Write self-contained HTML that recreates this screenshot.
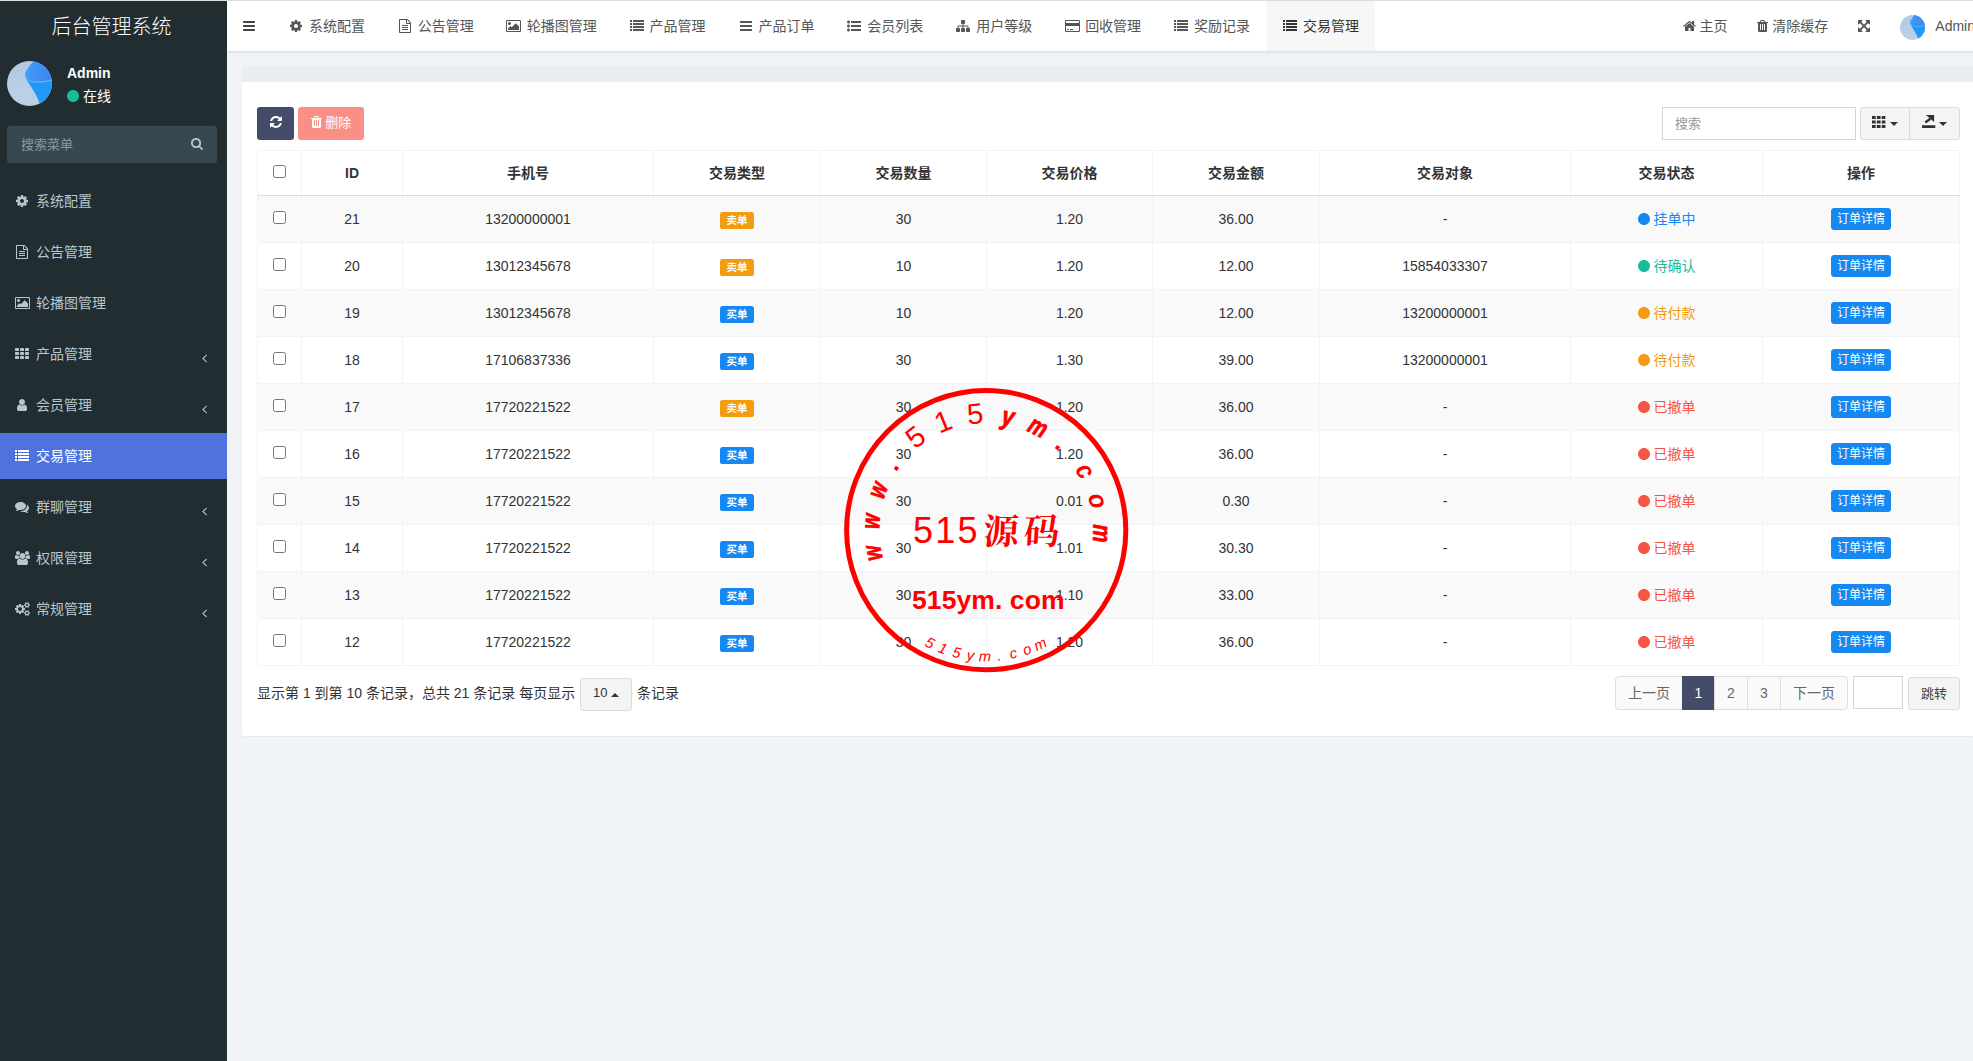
<!DOCTYPE html>
<html lang="zh-CN">
<head>
<meta charset="utf-8">
<title>后台管理系统</title>
<style>
*{box-sizing:border-box;}
html,body{margin:0;padding:0;}
html{overflow:hidden;}
body{width:1990px;height:1061px;position:relative;overflow:hidden;background:#f1f4f6;font-family:"Liberation Sans","Noto Sans CJK SC",sans-serif;font-size:14px;line-height:1.42857;color:#333;}
ul{list-style:none;margin:0;padding:0;}
a{text-decoration:none;color:inherit;}
svg.fa{display:inline-block;fill:currentColor;overflow:visible;}
.topline{position:absolute;left:0;top:0;width:1990px;height:1px;background:#dcdcdc;z-index:50;}
/* sidebar */
.sidebar{position:absolute;left:0;top:0;width:227px;height:1061px;background:#222d32;color:#b8c7ce;}
.logo{height:50px;line-height:54px;text-align:center;color:#fff;font-size:20px;font-weight:300;padding-right:4px;}
.user-panel{position:absolute;left:0;top:51px;width:227px;height:65px;}
.user-panel .avatar{position:absolute;left:7px;top:10px;}
.user-panel .info{position:absolute;left:67px;top:12px;color:#fff;}
.user-panel .info p{margin:0;font-weight:bold;font-size:14px;line-height:20px;}
.user-panel .st{font-size:14px;line-height:20px;margin-top:3px;}
.user-panel .st span{margin-left:4px;}
.sform{position:absolute;left:7px;top:126px;width:210px;height:37px;background:#374850;border-radius:3px;color:#8a9ba3;}
.sform .ph{position:absolute;left:14px;top:9px;font-size:13px;line-height:20px;}
.sform .sic{position:absolute;right:14px;top:7px;line-height:20px;}
.sform .sic svg{width:12px !important;height:13px !important;}
.smenu{position:absolute;left:0;top:178px;width:227px;}
.smenu li{height:46px;margin-bottom:5px;}
.smenu li a{display:block;height:46px;line-height:46px;padding-left:12px;position:relative;color:#b8c7ce;font-size:14px;}
.smenu li.active a{background:#4e73df;color:#fff;}
.smenu .arr{position:absolute;right:20.3px;top:3.5px;}
/* navbar */
.navbar{position:absolute;left:227px;top:1px;width:1763px;height:50px;background:#fff;box-shadow:0 1px 3px rgba(0,0,0,.12);color:#555;}
.navbar .toggle{position:absolute;left:0;top:0;width:44px;height:50px;line-height:50px;padding-left:16px;color:#444;}
.tabs{position:absolute;left:45px;top:0;height:50px;display:flex;}
.tabs li a{display:block;height:50px;line-height:50px;padding:0 15px;border-right:1px solid transparent;white-space:nowrap;color:#555;}
.tabs li.active a{background:#f7f7f7;color:#333;}
.rnav{position:absolute;right:0;top:0;height:50px;display:flex;}
.rnav li a{display:block;height:50px;line-height:50px;padding:0 15px;white-space:nowrap;color:#555;}
.rnav .um a{padding:0 15px 0 15px;}
.rnav .avatar{vertical-align:middle;margin-right:10px;margin-top:1px;}
/* content */
.content{position:absolute;left:242px;top:66px;width:1733px;}
.panel{background:#fff;border-radius:3px;box-shadow:0 1px 1px rgba(0,0,0,.05);height:670px;}
.phead{height:16px;background:#e8edf0;border-radius:3px 3px 0 0;}
.pbody{padding:0 15px;position:relative;}
.toolbar{position:absolute;left:15px;top:25px;width:1703px;height:33px;}
.btn{display:inline-block;height:33px;line-height:31px;font-size:13px;border-radius:3px;color:#fff;vertical-align:top;}
.bref{width:37px;background:#444c69;text-align:center;}
.bdel{width:66px;margin-left:4px;background:#f75444;opacity:.65;text-align:center;}
.tright{position:absolute;right:0;top:0;height:33px;}
.search{position:absolute;right:104px;top:0;width:194px;height:33px;border:1px solid #d2d6de;background:#fff;color:#999;padding-left:12px;line-height:31px;font-size:13px;}
.bgroup{position:absolute;right:0;top:0;width:100px;height:33px;display:flex;}
.bgroup a{display:block;height:33px;border:1px solid #ddd;background:#f4f4f4;line-height:31px;text-align:center;}
.bgroup .b1{width:50px;border-radius:3px 0 0 3px;}
.bgroup .b2{width:51px;margin-left:-1px;border-radius:0 3px 3px 0;}
.caret{display:inline-block;width:0;height:0;border-left:4px solid transparent;border-right:4px solid transparent;border-top:4px solid #333;vertical-align:middle;margin-left:4px;}
.caret.up{border-top:0;border-bottom:4px solid #333;}
/* table */
.tbl{position:absolute;left:15px;top:68px;width:1703px;border-collapse:collapse;table-layout:fixed;border:1px solid #f4f4f4;}
.tbl th,.tbl td{border:1px solid #f4f4f4;text-align:center;vertical-align:middle;padding:2px 0 0;font-size:14px;}
.tbl th{height:45px;font-weight:bold;border-bottom:1px solid #ddd;color:#333;}
.tbl td{height:47px;}
.tbl tbody tr:nth-child(odd){background:#f9f9f9;}
.chk{display:inline-block;width:13px;height:13px;border:1px solid #767676;border-radius:2.5px;background:#fff;vertical-align:middle;position:relative;top:-3px;}
.label{display:inline-block;font-size:10.5px;font-weight:bold;color:#fff;line-height:1;padding:.3em .6em .3em;border-radius:.25em;vertical-align:baseline;}
.lw{background:#f39c12;}
.li{background:#1688f1;}
.btn-xs{position:relative;top:-1px;display:inline-block;height:22px;line-height:21px;padding:0 5px;font-size:12px;color:#fff;background:#1688f1;border:1px solid #1688f1;border-radius:3px;}
/* pager */
.pager{position:absolute;left:15px;top:594px;width:1703px;height:34px;}
.pinfo{position:absolute;left:0;top:0;line-height:34px;white-space:nowrap;}
.psize{display:inline-block;width:52px;height:33px;line-height:28px;position:relative;top:0.5px;border:1px solid #ddd;background:#f4f4f4;border-radius:3px;text-align:center;vertical-align:middle;font-size:13px;margin:0 1px;}
.psize .caret{margin-left:0;vertical-align:0px;}
.pright{position:absolute;right:0;top:0;height:34px;}
.pg{position:absolute;right:112px;top:0;display:flex;height:34px;}
.pg li{height:34px;line-height:32px;padding:0;width:34px;text-align:center;border:1px solid #ddd;background:#fafafa;margin-left:-1px;color:#666;white-space:nowrap;}
.pg li:first-child{margin-left:0;width:68px;border-radius:4px 0 0 4px;}
.pg li:last-child{width:68px;border-radius:0 4px 4px 0;}
.pg li.active{background:#444c69;border-color:#444c69;color:#fff;width:33px;}
.jin{position:absolute;right:57px;top:0;width:50px;height:33px;border:1px solid #d2d6de;background:#fff;}
.jbtn{position:absolute;right:0;top:1px;width:52px;height:33px;line-height:31px;border:1px solid #ddd;background:#f4f4f4;border-radius:3px;text-align:center;font-size:13px;color:#444;}
/* watermark */
.wm{position:absolute;left:0;top:0;pointer-events:none;z-index:40;}
.wm text{fill:#ff0000;font-family:"Liberation Sans","Noto Sans CJK SC",sans-serif;}
.wm .kai{font-family:"Noto Serif CJK SC","Liberation Serif",serif;}

</style>
</head>
<body>
<div class="topline"></div>

<aside class="sidebar">
  <div class="logo">后台管理系统</div>
  <div class="user-panel">
    <svg class="avatar " width="45" height="45" viewBox="0 0 45 45"><defs><linearGradient id="agu45" x1="0" y1="0.5" x2="1" y2="0.6"><stop offset="0" stop-color="#469ffa"/><stop offset="0.35" stop-color="#3d92f7"/><stop offset="1" stop-color="#4385ee"/></linearGradient><linearGradient id="agl45" x1="0.2" y1="0" x2="0.6" y2="1"><stop offset="0" stop-color="#2a93f6"/><stop offset="1" stop-color="#1d9bf8"/></linearGradient><linearGradient id="agb45" x1="0" y1="0" x2="0" y2="1"><stop offset="0" stop-color="#b2c9e4"/><stop offset="1" stop-color="#bed1e7"/></linearGradient><clipPath id="ac45"><circle cx="22.5" cy="22.5" r="22.5"/></clipPath></defs><g clip-path="url(#ac45)"><rect width="45" height="45" fill="url(#agb45)"/><path d="M26.5 0 C23 5 17.5 10.5 18.3 15 C18.6 17.5 20.5 20 23.1 24.3 C25.5 28 29.5 34 33 43 L45 45 L45 0 Z" fill="url(#agl45)"/><path d="M26.5 0 C23 5 17.5 10.5 18.3 15 C19.5 19.5 24 21 30.6 21 C36 21 41 20 45 19 L45 0 Z" fill="url(#agu45)"/><path d="M18.3 15 C19.5 19.5 24 21 30.6 21 C36 21 41 20 45 19" fill="none" stroke="#62c6ff" stroke-width="1" opacity="0.95"/><path d="M26.3 0.3 C23 5 17.7 10.5 18.4 15" fill="none" stroke="#6bb4fb" stroke-width="0.7" opacity="0.6"/></g></svg>
    <div class="info"><p>Admin</p><div class="st"><svg class="fa " viewBox="0 -1536 1536 1792" style="width:12.000px;height:14px;vertical-align:-2.000px;fill:#18bc9c;"><path transform="scale(1,-1)" d="M1536 640C1536 1064 1192 1408 768 1408C344 1408 0 1064 0 640C0 216 344 -128 768 -128C1192 -128 1536 216 1536 640Z"/></svg><span>在线</span></div></div>
  </div>
  <div class="sform"><span class="ph">搜索菜单</span><span class="sic"><svg class="fa " viewBox="0 -1536 1664 1792" style="width:13.000px;height:14px;vertical-align:-2.000px;fill:#b8c7ce;"><path transform="scale(1,-1)" d="M1152 704C1152 457 951 256 704 256C457 256 256 457 256 704C256 951 457 1152 704 1152C951 1152 1152 951 1152 704ZM1664 -128C1664 -94 1650 -61 1627 -38L1284 305C1365 422 1408 562 1408 704C1408 1093 1093 1408 704 1408C315 1408 0 1093 0 704C0 315 315 0 704 0C846 0 986 43 1103 124L1446 -218C1469 -242 1502 -256 1536 -256C1606 -256 1664 -198 1664 -128Z"/></svg></span></div>
  <ul class="smenu">
<li class=""><a><svg class="fa " viewBox="0 -1536 1536 1792" style="width:12.000px;height:14px;vertical-align:-2.000px;margin:0 4.000px;"><path transform="scale(1,-1)" d="M1024 640C1024 499 909 384 768 384C627 384 512 499 512 640C512 781 627 896 768 896C909 896 1024 781 1024 640ZM1536 749C1536 766 1524 782 1507 785L1324 813C1314 846 1300 879 1283 911C1317 958 1354 1002 1388 1048C1393 1055 1396 1062 1396 1071C1396 1079 1394 1087 1389 1093C1347 1152 1277 1214 1224 1263C1217 1269 1208 1273 1199 1273C1190 1273 1181 1270 1175 1264L1033 1157C1004 1172 974 1184 943 1194L915 1378C913 1395 897 1408 879 1408H657C639 1408 625 1396 621 1380C605 1320 599 1255 592 1194C561 1184 530 1171 501 1156L363 1263C355 1269 346 1273 337 1273C303 1273 168 1127 144 1094C139 1087 135 1080 135 1071C135 1062 139 1054 145 1047C182 1002 218 957 252 909C236 879 223 849 213 817L27 789C12 786 0 768 0 753V531C0 514 12 498 29 495L212 468C222 434 236 401 253 369C219 322 182 278 148 232C143 225 140 218 140 209C140 201 142 193 147 186C189 128 259 66 312 18C319 11 328 7 337 7C346 7 355 10 362 16L503 123C532 108 562 96 593 86L621 -98C623 -115 639 -128 657 -128H879C897 -128 911 -116 915 -100C931 -40 937 25 944 86C975 96 1006 109 1035 124L1173 16C1181 11 1190 7 1199 7C1233 7 1368 154 1392 186C1398 193 1401 200 1401 209C1401 218 1397 227 1391 234C1354 279 1318 323 1284 372C1300 401 1312 431 1323 463L1508 491C1524 494 1536 512 1536 527Z"/></svg> <span>系统配置</span></a></li>
<li class=""><a><svg class="fa " viewBox="0 -1536 1536 1792" style="width:12.000px;height:14px;vertical-align:-2.000px;margin:0 4.000px;"><path transform="scale(1,-1)" d="M1468 1156 1156 1468C1119 1505 1045 1536 992 1536H96C43 1536 0 1493 0 1440V-160C0 -213 43 -256 96 -256H1440C1493 -256 1536 -213 1536 -160V992C1536 1045 1505 1119 1468 1156ZM1024 1400C1041 1394 1058 1385 1065 1378L1378 1065C1385 1058 1394 1041 1400 1024H1024ZM1408 -128H128V1408H896V992C896 939 939 896 992 896H1408ZM384 736V672C384 654 398 640 416 640H1120C1138 640 1152 654 1152 672V736C1152 754 1138 768 1120 768H416C398 768 384 754 384 736ZM1120 512H416C398 512 384 498 384 480V416C384 398 398 384 416 384H1120C1138 384 1152 398 1152 416V480C1152 498 1138 512 1120 512ZM1120 256H416C398 256 384 242 384 224V160C384 142 398 128 416 128H1120C1138 128 1152 142 1152 160V224C1152 242 1138 256 1120 256Z"/></svg> <span>公告管理</span></a></li>
<li class=""><a><svg class="fa " viewBox="0 -1536 1920 1792" style="width:15.000px;height:14px;vertical-align:-2.000px;margin:0 2.500px;"><path transform="scale(1,-1)" d="M640 960C640 1066 554 1152 448 1152C342 1152 256 1066 256 960C256 854 342 768 448 768C554 768 640 854 640 960ZM1664 576 1248 992 736 480 576 640 256 320V128H1664ZM1760 1280C1777 1280 1792 1265 1792 1248V32C1792 15 1777 0 1760 0H160C143 0 128 15 128 32V1248C128 1265 143 1280 160 1280H1760ZM1920 1248C1920 1336 1848 1408 1760 1408H160C72 1408 0 1336 0 1248V32C0 -56 72 -128 160 -128H1760C1848 -128 1920 -56 1920 32Z"/></svg> <span>轮播图管理</span></a></li>
<li class=""><a><svg class="fa " viewBox="0 -1536 1792 1792" style="width:14.000px;height:14px;vertical-align:-2.000px;margin:0 3.000px;"><path transform="scale(1,-1)" d="M512 288C512 341 469 384 416 384H96C43 384 0 341 0 288V96C0 43 43 0 96 0H416C469 0 512 43 512 96ZM512 800C512 853 469 896 416 896H96C43 896 0 853 0 800V608C0 555 43 512 96 512H416C469 512 512 555 512 608ZM1152 288C1152 341 1109 384 1056 384H736C683 384 640 341 640 288V96C640 43 683 0 736 0H1056C1109 0 1152 43 1152 96ZM512 1312C512 1365 469 1408 416 1408H96C43 1408 0 1365 0 1312V1120C0 1067 43 1024 96 1024H416C469 1024 512 1067 512 1120ZM1152 800C1152 853 1109 896 1056 896H736C683 896 640 853 640 800V608C640 555 683 512 736 512H1056C1109 512 1152 555 1152 608ZM1792 288C1792 341 1749 384 1696 384H1376C1323 384 1280 341 1280 288V96C1280 43 1323 0 1376 0H1696C1749 0 1792 43 1792 96ZM1152 1312C1152 1365 1109 1408 1056 1408H736C683 1408 640 1365 640 1312V1120C640 1067 683 1024 736 1024H1056C1109 1024 1152 1067 1152 1120ZM1792 800C1792 853 1749 896 1696 896H1376C1323 896 1280 853 1280 800V608C1280 555 1323 512 1376 512H1696C1749 512 1792 555 1792 608ZM1792 1312C1792 1365 1749 1408 1696 1408H1376C1323 1408 1280 1365 1280 1312V1120C1280 1067 1323 1024 1376 1024H1696C1749 1024 1792 1067 1792 1120Z"/></svg> <span>产品管理</span><span class="arr"><svg class="fa " viewBox="0 -1536 640 1792" style="width:5.000px;height:14px;vertical-align:-2.000px;"><path transform="scale(1,-1)" d="M627 992C627 1001 623 1009 617 1015L567 1065C561 1071 552 1075 544 1075C536 1075 527 1071 521 1065L55 599C49 593 45 584 45 576C45 568 49 559 55 553L521 87C527 81 536 77 544 77C552 77 561 81 567 87L617 137C623 143 627 152 627 160C627 168 623 177 617 183L224 576L617 969C623 975 627 984 627 992Z"/></svg></span></a></li>
<li class=""><a><svg class="fa " viewBox="0 -1536 1280 1792" style="width:10.000px;height:14px;vertical-align:-2.000px;margin:0 5.000px;"><path transform="scale(1,-1)" d="M1280 137C1280 400 1215 704 953 704C872 625 762 576 640 576C518 576 408 625 327 704C65 704 0 400 0 137C0 -9 96 -128 213 -128H1067C1184 -128 1280 -9 1280 137ZM1024 1024C1024 1236 852 1408 640 1408C428 1408 256 1236 256 1024C256 812 428 640 640 640C852 640 1024 812 1024 1024Z"/></svg> <span>会员管理</span><span class="arr"><svg class="fa " viewBox="0 -1536 640 1792" style="width:5.000px;height:14px;vertical-align:-2.000px;"><path transform="scale(1,-1)" d="M627 992C627 1001 623 1009 617 1015L567 1065C561 1071 552 1075 544 1075C536 1075 527 1071 521 1065L55 599C49 593 45 584 45 576C45 568 49 559 55 553L521 87C527 81 536 77 544 77C552 77 561 81 567 87L617 137C623 143 627 152 627 160C627 168 623 177 617 183L224 576L617 969C623 975 627 984 627 992Z"/></svg></span></a></li>
<li class="active"><a><svg class="fa " viewBox="0 -1536 1792 1792" style="width:14.000px;height:14px;vertical-align:-2.000px;margin:0 3.000px;"><path transform="scale(1,-1)" d="M256 224C256 241 241 256 224 256H32C15 256 0 241 0 224V32C0 15 15 0 32 0H224C241 0 256 15 256 32ZM256 608C256 625 241 640 224 640H32C15 640 0 625 0 608V416C0 399 15 384 32 384H224C241 384 256 399 256 416ZM256 992C256 1009 241 1024 224 1024H32C15 1024 0 1009 0 992V800C0 783 15 768 32 768H224C241 768 256 783 256 800ZM1792 224C1792 241 1777 256 1760 256H416C399 256 384 241 384 224V32C384 15 399 0 416 0H1760C1777 0 1792 15 1792 32ZM256 1376C256 1393 241 1408 224 1408H32C15 1408 0 1393 0 1376V1184C0 1167 15 1152 32 1152H224C241 1152 256 1167 256 1184ZM1792 608C1792 625 1777 640 1760 640H416C399 640 384 625 384 608V416C384 399 399 384 416 384H1760C1777 384 1792 399 1792 416ZM1792 992C1792 1009 1777 1024 1760 1024H416C399 1024 384 1009 384 992V800C384 783 399 768 416 768H1760C1777 768 1792 783 1792 800ZM1792 1376C1792 1393 1777 1408 1760 1408H416C399 1408 384 1393 384 1376V1184C384 1167 399 1152 416 1152H1760C1777 1152 1792 1167 1792 1184Z"/></svg> <span>交易管理</span></a></li>
<li class=""><a><svg class="fa " viewBox="0 -1536 1792 1792" style="width:14.000px;height:14px;vertical-align:-2.000px;margin:0 3.000px;"><path transform="scale(1,-1)" d="M1408 768C1408 1051 1093 1280 704 1280C315 1280 0 1051 0 768C0 606 104 461 266 367C232 284 188 245 149 201C138 188 125 176 129 157C129 157 129 157 129 157C132 140 146 128 161 128C162 128 163 128 164 128C194 132 223 137 250 144C351 170 445 213 528 272C584 262 643 256 704 256C1093 256 1408 485 1408 768ZM1792 512C1792 679 1682 827 1513 920C1528 871 1536 820 1536 768C1536 589 1444 424 1277 302C1122 190 919 128 704 128C675 128 645 130 616 132C741 50 907 0 1088 0C1149 0 1208 6 1264 16C1347 -43 1441 -86 1542 -112C1569 -119 1598 -124 1628 -128C1644 -130 1659 -117 1663 -99C1663 -99 1663 -99 1663 -99C1667 -80 1654 -68 1643 -55C1604 -11 1560 28 1526 111C1688 205 1792 349 1792 512Z"/></svg> <span>群聊管理</span><span class="arr"><svg class="fa " viewBox="0 -1536 640 1792" style="width:5.000px;height:14px;vertical-align:-2.000px;"><path transform="scale(1,-1)" d="M627 992C627 1001 623 1009 617 1015L567 1065C561 1071 552 1075 544 1075C536 1075 527 1071 521 1065L55 599C49 593 45 584 45 576C45 568 49 559 55 553L521 87C527 81 536 77 544 77C552 77 561 81 567 87L617 137C623 143 627 152 627 160C627 168 623 177 617 183L224 576L617 969C623 975 627 984 627 992Z"/></svg></span></a></li>
<li class=""><a><svg class="fa " viewBox="0 -1536 1920 1792" style="width:15.000px;height:14px;vertical-align:-2.000px;margin:0 2.500px;"><path transform="scale(1,-1)" d="M593 640C541 715 512 805 512 896C512 918 514 940 517 962C474 947 430 939 384 939C249 939 145 1024 124 1024C-3 1024 0 752 0 671C0 560 94 512 194 512H328C395 592 489 637 593 640ZM1664 3C1664 229 1611 576 1318 576C1284 576 1160 437 960 437C760 437 636 576 602 576C309 576 256 229 256 3C256 -159 363 -256 523 -256H1397C1557 -256 1664 -159 1664 3ZM640 1280C640 1421 525 1536 384 1536C243 1536 128 1421 128 1280C128 1139 243 1024 384 1024C525 1024 640 1139 640 1280ZM1344 896C1344 1108 1172 1280 960 1280C748 1280 576 1108 576 896C576 684 748 512 960 512C1172 512 1344 684 1344 896ZM1920 671C1920 752 1923 1024 1796 1024C1775 1024 1671 939 1536 939C1490 939 1446 947 1403 962C1406 940 1408 918 1408 896C1408 805 1379 715 1327 640C1431 637 1525 592 1592 512H1726C1826 512 1920 560 1920 671ZM1792 1280C1792 1421 1677 1536 1536 1536C1395 1536 1280 1421 1280 1280C1280 1139 1395 1024 1536 1024C1677 1024 1792 1139 1792 1280Z"/></svg> <span>权限管理</span><span class="arr"><svg class="fa " viewBox="0 -1536 640 1792" style="width:5.000px;height:14px;vertical-align:-2.000px;"><path transform="scale(1,-1)" d="M627 992C627 1001 623 1009 617 1015L567 1065C561 1071 552 1075 544 1075C536 1075 527 1071 521 1065L55 599C49 593 45 584 45 576C45 568 49 559 55 553L521 87C527 81 536 77 544 77C552 77 561 81 567 87L617 137C623 143 627 152 627 160C627 168 623 177 617 183L224 576L617 969C623 975 627 984 627 992Z"/></svg></span></a></li>
<li class=""><a><svg class="fa " viewBox="0 -1536 1920 1792" style="width:15.000px;height:14px;vertical-align:-2.000px;margin:0 2.500px;"><path transform="scale(1,-1)" d="M896 640C896 499 781 384 640 384C499 384 384 499 384 640C384 781 499 896 640 896C781 896 896 781 896 640ZM1664 128C1664 58 1607 0 1536 0C1466 0 1408 57 1408 128C1408 198 1466 256 1536 256C1606 256 1664 198 1664 128ZM1664 1152C1664 1082 1607 1024 1536 1024C1466 1024 1408 1081 1408 1152C1408 1222 1466 1280 1536 1280C1606 1280 1664 1222 1664 1152ZM1280 731C1280 745 1270 758 1256 761L1104 784C1095 812 1083 839 1070 866C1098 905 1128 941 1157 980C1161 986 1164 992 1164 999C1164 1027 1046 1135 1020 1159C1014 1164 1007 1167 999 1167C992 1167 985 1165 979 1160L861 1071C837 1083 812 1094 786 1102L763 1255C761 1269 747 1280 733 1280H547C533 1280 521 1270 517 1256C504 1207 499 1152 494 1102C467 1093 442 1083 417 1070L302 1160C296 1164 289 1167 281 1167C252 1167 140 1046 120 1019C115 1013 113 1006 113 999C113 992 116 985 120 979C152 941 182 904 210 864C197 839 186 814 178 788L23 764C10 762 0 747 0 734V549C0 535 10 522 24 520L176 496C185 468 197 441 211 414C182 375 152 338 123 300C119 294 116 288 116 281C116 252 234 145 260 121C266 116 273 113 281 113C288 113 296 115 301 120L419 209C443 197 468 186 494 178L517 25C519 11 533 0 547 0H733C747 0 759 10 763 24C776 73 781 128 786 179C813 187 838 197 863 210L978 120C984 116 991 113 999 113C1028 113 1140 235 1160 262C1165 267 1167 274 1167 281C1167 289 1164 295 1160 301C1128 339 1098 376 1070 416C1083 441 1094 466 1102 492L1257 516C1270 518 1280 533 1280 546ZM1920 198C1920 213 1791 227 1771 229C1763 247 1753 265 1741 281C1750 301 1792 401 1792 419C1792 421 1791 424 1788 426C1776 433 1669 496 1664 496L1658 494C1624 460 1594 421 1566 382C1556 383 1546 384 1536 384C1526 384 1516 383 1506 382C1496 397 1421 496 1408 496C1403 496 1296 432 1284 426C1281 424 1280 421 1280 419C1280 402 1322 301 1331 281C1319 265 1309 247 1301 229C1281 227 1152 213 1152 198V58C1152 43 1281 29 1301 27C1309 8 1319 -9 1331 -25C1322 -45 1280 -146 1280 -163C1280 -165 1281 -168 1284 -170C1296 -177 1403 -241 1408 -241C1421 -241 1496 -141 1506 -126C1516 -127 1526 -128 1536 -128C1546 -128 1556 -127 1566 -126C1576 -141 1651 -241 1664 -241C1669 -241 1776 -177 1788 -170C1791 -168 1792 -166 1792 -163C1792 -145 1750 -45 1741 -25C1753 -9 1763 8 1771 27C1791 29 1920 43 1920 58ZM1920 1222C1920 1237 1791 1251 1771 1253C1763 1271 1753 1289 1741 1305C1750 1325 1792 1425 1792 1443C1792 1445 1791 1448 1788 1450C1776 1457 1669 1520 1664 1520L1658 1518C1624 1484 1594 1445 1566 1406C1556 1407 1546 1408 1536 1408C1526 1408 1516 1407 1506 1406C1496 1421 1421 1520 1408 1520C1403 1520 1296 1456 1284 1450C1281 1448 1280 1445 1280 1443C1280 1426 1322 1325 1331 1305C1319 1289 1309 1271 1301 1253C1281 1251 1152 1237 1152 1222V1082C1152 1067 1281 1053 1301 1051C1309 1032 1319 1015 1331 999C1322 979 1280 878 1280 861C1280 859 1281 856 1284 854C1296 847 1403 783 1408 783C1421 783 1496 883 1506 898C1516 897 1526 896 1536 896C1546 896 1556 897 1566 898C1576 883 1651 783 1664 783C1669 783 1776 847 1788 854C1791 856 1792 858 1792 861C1792 879 1750 979 1741 999C1753 1015 1763 1032 1771 1051C1791 1053 1920 1067 1920 1082Z"/></svg> <span>常规管理</span><span class="arr"><svg class="fa " viewBox="0 -1536 640 1792" style="width:5.000px;height:14px;vertical-align:-2.000px;"><path transform="scale(1,-1)" d="M627 992C627 1001 623 1009 617 1015L567 1065C561 1071 552 1075 544 1075C536 1075 527 1071 521 1065L55 599C49 593 45 584 45 576C45 568 49 559 55 553L521 87C527 81 536 77 544 77C552 77 561 81 567 87L617 137C623 143 627 152 627 160C627 168 623 177 617 183L224 576L617 969C623 975 627 984 627 992Z"/></svg></span></a></li>
  </ul>
</aside>

<header class="navbar">
  <a class="toggle"><svg class="fa " viewBox="0 -1536 1536 1792" style="width:12.000px;height:14px;vertical-align:-2.000px;"><path transform="scale(1,-1)" d="M1536 192C1536 227 1507 256 1472 256H64C29 256 0 227 0 192V64C0 29 29 0 64 0H1472C1507 0 1536 29 1536 64ZM1536 704C1536 739 1507 768 1472 768H64C29 768 0 739 0 704V576C0 541 29 512 64 512H1472C1507 512 1536 541 1536 576ZM1536 1216C1536 1251 1507 1280 1472 1280H64C29 1280 0 1251 0 1216V1088C0 1053 29 1024 64 1024H1472C1507 1024 1536 1053 1536 1088Z"/></svg></a>
  <ul class="tabs"><li class=""><a><svg class="fa " viewBox="0 -1536 1536 1792" style="width:12.000px;height:14px;vertical-align:-2.000px;margin:0 3.000px;"><path transform="scale(1,-1)" d="M1024 640C1024 499 909 384 768 384C627 384 512 499 512 640C512 781 627 896 768 896C909 896 1024 781 1024 640ZM1536 749C1536 766 1524 782 1507 785L1324 813C1314 846 1300 879 1283 911C1317 958 1354 1002 1388 1048C1393 1055 1396 1062 1396 1071C1396 1079 1394 1087 1389 1093C1347 1152 1277 1214 1224 1263C1217 1269 1208 1273 1199 1273C1190 1273 1181 1270 1175 1264L1033 1157C1004 1172 974 1184 943 1194L915 1378C913 1395 897 1408 879 1408H657C639 1408 625 1396 621 1380C605 1320 599 1255 592 1194C561 1184 530 1171 501 1156L363 1263C355 1269 346 1273 337 1273C303 1273 168 1127 144 1094C139 1087 135 1080 135 1071C135 1062 139 1054 145 1047C182 1002 218 957 252 909C236 879 223 849 213 817L27 789C12 786 0 768 0 753V531C0 514 12 498 29 495L212 468C222 434 236 401 253 369C219 322 182 278 148 232C143 225 140 218 140 209C140 201 142 193 147 186C189 128 259 66 312 18C319 11 328 7 337 7C346 7 355 10 362 16L503 123C532 108 562 96 593 86L621 -98C623 -115 639 -128 657 -128H879C897 -128 911 -116 915 -100C931 -40 937 25 944 86C975 96 1006 109 1035 124L1173 16C1181 11 1190 7 1199 7C1233 7 1368 154 1392 186C1398 193 1401 200 1401 209C1401 218 1397 227 1391 234C1354 279 1318 323 1284 372C1300 401 1312 431 1323 463L1508 491C1524 494 1536 512 1536 527Z"/></svg> <span>系统配置</span></a></li><li class=""><a><svg class="fa " viewBox="0 -1536 1536 1792" style="width:12.000px;height:14px;vertical-align:-2.000px;margin:0 3.000px;"><path transform="scale(1,-1)" d="M1468 1156 1156 1468C1119 1505 1045 1536 992 1536H96C43 1536 0 1493 0 1440V-160C0 -213 43 -256 96 -256H1440C1493 -256 1536 -213 1536 -160V992C1536 1045 1505 1119 1468 1156ZM1024 1400C1041 1394 1058 1385 1065 1378L1378 1065C1385 1058 1394 1041 1400 1024H1024ZM1408 -128H128V1408H896V992C896 939 939 896 992 896H1408ZM384 736V672C384 654 398 640 416 640H1120C1138 640 1152 654 1152 672V736C1152 754 1138 768 1120 768H416C398 768 384 754 384 736ZM1120 512H416C398 512 384 498 384 480V416C384 398 398 384 416 384H1120C1138 384 1152 398 1152 416V480C1152 498 1138 512 1120 512ZM1120 256H416C398 256 384 242 384 224V160C384 142 398 128 416 128H1120C1138 128 1152 142 1152 160V224C1152 242 1138 256 1120 256Z"/></svg> <span>公告管理</span></a></li><li class=""><a><svg class="fa " viewBox="0 -1536 1920 1792" style="width:15.000px;height:14px;vertical-align:-2.000px;margin:0 1.500px;"><path transform="scale(1,-1)" d="M640 960C640 1066 554 1152 448 1152C342 1152 256 1066 256 960C256 854 342 768 448 768C554 768 640 854 640 960ZM1664 576 1248 992 736 480 576 640 256 320V128H1664ZM1760 1280C1777 1280 1792 1265 1792 1248V32C1792 15 1777 0 1760 0H160C143 0 128 15 128 32V1248C128 1265 143 1280 160 1280H1760ZM1920 1248C1920 1336 1848 1408 1760 1408H160C72 1408 0 1336 0 1248V32C0 -56 72 -128 160 -128H1760C1848 -128 1920 -56 1920 32Z"/></svg> <span>轮播图管理</span></a></li><li class=""><a><svg class="fa " viewBox="0 -1536 1792 1792" style="width:14.000px;height:14px;vertical-align:-2.000px;margin:0 2.000px;"><path transform="scale(1,-1)" d="M256 224C256 241 241 256 224 256H32C15 256 0 241 0 224V32C0 15 15 0 32 0H224C241 0 256 15 256 32ZM256 608C256 625 241 640 224 640H32C15 640 0 625 0 608V416C0 399 15 384 32 384H224C241 384 256 399 256 416ZM256 992C256 1009 241 1024 224 1024H32C15 1024 0 1009 0 992V800C0 783 15 768 32 768H224C241 768 256 783 256 800ZM1792 224C1792 241 1777 256 1760 256H416C399 256 384 241 384 224V32C384 15 399 0 416 0H1760C1777 0 1792 15 1792 32ZM256 1376C256 1393 241 1408 224 1408H32C15 1408 0 1393 0 1376V1184C0 1167 15 1152 32 1152H224C241 1152 256 1167 256 1184ZM1792 608C1792 625 1777 640 1760 640H416C399 640 384 625 384 608V416C384 399 399 384 416 384H1760C1777 384 1792 399 1792 416ZM1792 992C1792 1009 1777 1024 1760 1024H416C399 1024 384 1009 384 992V800C384 783 399 768 416 768H1760C1777 768 1792 783 1792 800ZM1792 1376C1792 1393 1777 1408 1760 1408H416C399 1408 384 1393 384 1376V1184C384 1167 399 1152 416 1152H1760C1777 1152 1792 1167 1792 1184Z"/></svg> <span>产品管理</span></a></li><li class=""><a><svg class="fa " viewBox="0 -1536 1536 1792" style="width:12.000px;height:14px;vertical-align:-2.000px;margin:0 3.000px;"><path transform="scale(1,-1)" d="M1536 192C1536 227 1507 256 1472 256H64C29 256 0 227 0 192V64C0 29 29 0 64 0H1472C1507 0 1536 29 1536 64ZM1536 704C1536 739 1507 768 1472 768H64C29 768 0 739 0 704V576C0 541 29 512 64 512H1472C1507 512 1536 541 1536 576ZM1536 1216C1536 1251 1507 1280 1472 1280H64C29 1280 0 1251 0 1216V1088C0 1053 29 1024 64 1024H1472C1507 1024 1536 1053 1536 1088Z"/></svg> <span>产品订单</span></a></li><li class=""><a><svg class="fa " viewBox="0 -1536 1792 1792" style="width:14.000px;height:14px;vertical-align:-2.000px;margin:0 2.000px;"><path transform="scale(1,-1)" d="M384 128C384 234 298 320 192 320C86 320 0 234 0 128C0 22 86 -64 192 -64C298 -64 384 22 384 128ZM384 640C384 746 298 832 192 832C86 832 0 746 0 640C0 534 86 448 192 448C298 448 384 534 384 640ZM1792 224C1792 241 1777 256 1760 256H544C527 256 512 241 512 224V32C512 15 527 0 544 0H1760C1777 0 1792 15 1792 32ZM384 1152C384 1258 298 1344 192 1344C86 1344 0 1258 0 1152C0 1046 86 960 192 960C298 960 384 1046 384 1152ZM1792 736C1792 753 1777 768 1760 768H544C527 768 512 753 512 736V544C512 527 527 512 544 512H1760C1777 512 1792 527 1792 544ZM1792 1248C1792 1265 1777 1280 1760 1280H544C527 1280 512 1265 512 1248V1056C512 1039 527 1024 544 1024H1760C1777 1024 1792 1039 1792 1056Z"/></svg> <span>会员列表</span></a></li><li class=""><a><svg class="fa " viewBox="0 -1536 1792 1792" style="width:14.000px;height:14px;vertical-align:-2.000px;margin:0 2.000px;"><path transform="scale(1,-1)" d="M1792 288C1792 341 1749 384 1696 384H1600V576C1600 646 1542 704 1472 704H960V896H1056C1109 896 1152 939 1152 992V1312C1152 1365 1109 1408 1056 1408H736C683 1408 640 1365 640 1312V992C640 939 683 896 736 896H832V704H320C250 704 192 646 192 576V384H96C43 384 0 341 0 288V-32C0 -85 43 -128 96 -128H416C469 -128 512 -85 512 -32V288C512 341 469 384 416 384H320V576H832V384H736C683 384 640 341 640 288V-32C640 -85 683 -128 736 -128H1056C1109 -128 1152 -85 1152 -32V288C1152 341 1109 384 1056 384H960V576H1472V384H1376C1323 384 1280 341 1280 288V-32C1280 -85 1323 -128 1376 -128H1696C1749 -128 1792 -85 1792 -32Z"/></svg> <span>用户等级</span></a></li><li class=""><a><svg class="fa " viewBox="0 -1536 1920 1792" style="width:15.000px;height:14px;vertical-align:-2.000px;margin:0 1.500px;"><path transform="scale(1,-1)" d="M1760 1408H160C72 1408 0 1336 0 1248V32C0 -56 72 -128 160 -128H1760C1848 -128 1920 -56 1920 32V1248C1920 1336 1848 1408 1760 1408ZM160 1280H1760C1777 1280 1792 1265 1792 1248V1024H128V1248C128 1265 143 1280 160 1280ZM1760 0H160C143 0 128 15 128 32V640H1792V32C1792 15 1777 0 1760 0ZM256 128H512V256H256ZM640 128H1024V256H640Z"/></svg> <span>回收管理</span></a></li><li class=""><a><svg class="fa " viewBox="0 -1536 1792 1792" style="width:14.000px;height:14px;vertical-align:-2.000px;margin:0 2.000px;"><path transform="scale(1,-1)" d="M256 224C256 241 241 256 224 256H32C15 256 0 241 0 224V32C0 15 15 0 32 0H224C241 0 256 15 256 32ZM256 608C256 625 241 640 224 640H32C15 640 0 625 0 608V416C0 399 15 384 32 384H224C241 384 256 399 256 416ZM256 992C256 1009 241 1024 224 1024H32C15 1024 0 1009 0 992V800C0 783 15 768 32 768H224C241 768 256 783 256 800ZM1792 224C1792 241 1777 256 1760 256H416C399 256 384 241 384 224V32C384 15 399 0 416 0H1760C1777 0 1792 15 1792 32ZM256 1376C256 1393 241 1408 224 1408H32C15 1408 0 1393 0 1376V1184C0 1167 15 1152 32 1152H224C241 1152 256 1167 256 1184ZM1792 608C1792 625 1777 640 1760 640H416C399 640 384 625 384 608V416C384 399 399 384 416 384H1760C1777 384 1792 399 1792 416ZM1792 992C1792 1009 1777 1024 1760 1024H416C399 1024 384 1009 384 992V800C384 783 399 768 416 768H1760C1777 768 1792 783 1792 800ZM1792 1376C1792 1393 1777 1408 1760 1408H416C399 1408 384 1393 384 1376V1184C384 1167 399 1152 416 1152H1760C1777 1152 1792 1167 1792 1184Z"/></svg> <span>奖励记录</span></a></li><li class="active"><a><svg class="fa " viewBox="0 -1536 1792 1792" style="width:14.000px;height:14px;vertical-align:-2.000px;margin:0 2.000px;"><path transform="scale(1,-1)" d="M256 224C256 241 241 256 224 256H32C15 256 0 241 0 224V32C0 15 15 0 32 0H224C241 0 256 15 256 32ZM256 608C256 625 241 640 224 640H32C15 640 0 625 0 608V416C0 399 15 384 32 384H224C241 384 256 399 256 416ZM256 992C256 1009 241 1024 224 1024H32C15 1024 0 1009 0 992V800C0 783 15 768 32 768H224C241 768 256 783 256 800ZM1792 224C1792 241 1777 256 1760 256H416C399 256 384 241 384 224V32C384 15 399 0 416 0H1760C1777 0 1792 15 1792 32ZM256 1376C256 1393 241 1408 224 1408H32C15 1408 0 1393 0 1376V1184C0 1167 15 1152 32 1152H224C241 1152 256 1167 256 1184ZM1792 608C1792 625 1777 640 1760 640H416C399 640 384 625 384 608V416C384 399 399 384 416 384H1760C1777 384 1792 399 1792 416ZM1792 992C1792 1009 1777 1024 1760 1024H416C399 1024 384 1009 384 992V800C384 783 399 768 416 768H1760C1777 768 1792 783 1792 800ZM1792 1376C1792 1393 1777 1408 1760 1408H416C399 1408 384 1393 384 1376V1184C384 1167 399 1152 416 1152H1760C1777 1152 1792 1167 1792 1184Z"/></svg> <span>交易管理</span></a></li></ul>
  <ul class="rnav">
    <li><a><svg class="fa " viewBox="0 -1536 1664 1792" style="width:13.000px;height:14px;vertical-align:-2.000px;"><path transform="scale(1,-1)" d="M1408 544C1408 546 1408 548 1407 550L832 1024L257 550C257 548 256 546 256 544V64C256 29 285 0 320 0H704V384H960V0H1344C1379 0 1408 29 1408 64ZM1631 613C1642 626 1640 647 1627 658L1408 840V1248C1408 1266 1394 1280 1376 1280H1184C1166 1280 1152 1266 1152 1248V1053L908 1257C866 1292 798 1292 756 1257L37 658C24 647 22 626 33 613L95 539C100 533 108 529 116 528C125 527 133 530 140 535L832 1112L1524 535C1530 530 1537 528 1545 528C1546 528 1547 528 1548 528C1556 529 1564 533 1569 539L1631 613Z"/></svg> 主页</a></li>
    <li><a><svg class="fa " viewBox="0 -1536 1408 1792" style="width:11.000px;height:14px;vertical-align:-2.000px;"><path transform="scale(1,-1)" d="M512 160C512 142 498 128 480 128H416C398 128 384 142 384 160V864C384 882 398 896 416 896H480C498 896 512 882 512 864V160ZM768 160C768 142 754 128 736 128H672C654 128 640 142 640 160V864C640 882 654 896 672 896H736C754 896 768 882 768 864V160ZM1024 160C1024 142 1010 128 992 128H928C910 128 896 142 896 160V864C896 882 910 896 928 896H992C1010 896 1024 882 1024 864V160ZM480 1152 529 1269C532 1273 540 1279 546 1280H863C868 1279 877 1273 880 1269L928 1152ZM1408 1120C1408 1138 1394 1152 1376 1152H1067L997 1319C977 1368 917 1408 864 1408H544C491 1408 431 1368 411 1319L341 1152H32C14 1152 0 1138 0 1120V1056C0 1038 14 1024 32 1024H128V72C128 -38 200 -128 288 -128H1120C1208 -128 1280 -34 1280 76V1024H1376C1394 1024 1408 1038 1408 1056Z"/></svg> 清除缓存</a></li>
    <li><a><svg class="fa " viewBox="0 -1536 1536 1792" style="width:12.000px;height:14px;vertical-align:-2.000px;"><path transform="scale(1,-1)" d="M1283 995 1427 851C1439 839 1455 832 1472 832C1480 832 1489 834 1497 837C1520 847 1536 870 1536 896V1344C1536 1379 1507 1408 1472 1408H1024C998 1408 975 1392 965 1368C955 1345 960 1317 979 1299L1123 1155L768 800L413 1155L557 1299C576 1317 581 1345 571 1368C561 1392 538 1408 512 1408H64C29 1408 0 1379 0 1344V896C0 870 16 847 40 837C47 834 56 832 64 832C81 832 97 839 109 851L253 995L608 640L253 285L109 429C91 448 63 453 40 443C16 433 0 410 0 384V-64C0 -99 29 -128 64 -128H512C538 -128 561 -112 571 -88C581 -65 576 -37 557 -19L413 125L768 480L1123 125L979 -19C960 -37 955 -65 965 -88C975 -112 998 -128 1024 -128H1472C1507 -128 1536 -99 1536 -64V384C1536 410 1520 433 1497 443C1473 453 1445 448 1427 429L1283 285L928 640Z"/></svg></a></li>
    <li class="um"><a><svg class="avatar sm" width="25" height="25" viewBox="0 0 45 45"><defs><linearGradient id="agu25" x1="0" y1="0.5" x2="1" y2="0.6"><stop offset="0" stop-color="#469ffa"/><stop offset="0.35" stop-color="#3d92f7"/><stop offset="1" stop-color="#4385ee"/></linearGradient><linearGradient id="agl25" x1="0.2" y1="0" x2="0.6" y2="1"><stop offset="0" stop-color="#2a93f6"/><stop offset="1" stop-color="#1d9bf8"/></linearGradient><linearGradient id="agb25" x1="0" y1="0" x2="0" y2="1"><stop offset="0" stop-color="#b2c9e4"/><stop offset="1" stop-color="#bed1e7"/></linearGradient><clipPath id="ac25"><circle cx="22.5" cy="22.5" r="22.5"/></clipPath></defs><g clip-path="url(#ac25)"><rect width="45" height="45" fill="url(#agb25)"/><path d="M26.5 0 C23 5 17.5 10.5 18.3 15 C18.6 17.5 20.5 20 23.1 24.3 C25.5 28 29.5 34 33 43 L45 45 L45 0 Z" fill="url(#agl25)"/><path d="M26.5 0 C23 5 17.5 10.5 18.3 15 C19.5 19.5 24 21 30.6 21 C36 21 41 20 45 19 L45 0 Z" fill="url(#agu25)"/><path d="M18.3 15 C19.5 19.5 24 21 30.6 21 C36 21 41 20 45 19" fill="none" stroke="#62c6ff" stroke-width="1" opacity="0.95"/><path d="M26.3 0.3 C23 5 17.7 10.5 18.4 15" fill="none" stroke="#6bb4fb" stroke-width="0.7" opacity="0.6"/></g></svg><span>Admin</span></a></li>
  </ul>
</header>

<div class="content">
 <div class="panel">
  <div class="phead"></div>
  <div class="pbody">
   <div class="toolbar">
     <a class="btn bref"><svg class="fa " viewBox="0 -1536 1536 1792" style="width:12.000px;height:14px;vertical-align:-2.000px;fill:#fff;"><path transform="scale(1,-1)" d="M1511 480C1511 497 1497 512 1479 512H1287C1272 512 1262 503 1257 489C1240 449 1228 411 1204 372C1111 220 946 128 768 128C639 128 514 178 420 266L557 403C569 415 576 431 576 448C576 483 547 512 512 512H64C29 512 0 483 0 448V0C0 -35 29 -64 64 -64C81 -64 97 -57 109 -45L238 84C380 -51 569 -128 764 -128C1133 -128 1425 119 1510 473C1511 475 1511 478 1511 480ZM1536 1280C1536 1315 1507 1344 1472 1344C1455 1344 1439 1337 1427 1325L1297 1196C1155 1330 964 1408 768 1408C399 1408 104 1162 18 807C18 805 18 802 18 800C18 783 32 768 50 768H249C264 768 274 777 279 791C296 831 308 869 332 908C425 1060 590 1152 768 1152C897 1152 1022 1103 1117 1015L979 877C967 865 960 849 960 832C960 797 989 768 1024 768H1472C1507 768 1536 797 1536 832Z"/></svg></a><a class="btn bdel"><svg class="fa " viewBox="0 -1536 1408 1792" style="width:11.000px;height:14px;vertical-align:-2.000px;fill:#fff;"><path transform="scale(1,-1)" d="M512 160C512 142 498 128 480 128H416C398 128 384 142 384 160V864C384 882 398 896 416 896H480C498 896 512 882 512 864V160ZM768 160C768 142 754 128 736 128H672C654 128 640 142 640 160V864C640 882 654 896 672 896H736C754 896 768 882 768 864V160ZM1024 160C1024 142 1010 128 992 128H928C910 128 896 142 896 160V864C896 882 910 896 928 896H992C1010 896 1024 882 1024 864V160ZM480 1152 529 1269C532 1273 540 1279 546 1280H863C868 1279 877 1273 880 1269L928 1152ZM1408 1120C1408 1138 1394 1152 1376 1152H1067L997 1319C977 1368 917 1408 864 1408H544C491 1408 431 1368 411 1319L341 1152H32C14 1152 0 1138 0 1120V1056C0 1038 14 1024 32 1024H128V72C128 -38 200 -128 288 -128H1120C1208 -128 1280 -34 1280 76V1024H1376C1394 1024 1408 1038 1408 1056Z"/></svg> 删除</a>
     <div class="tright">
       <div class="search"><span>搜索</span></div>
       <div class="bgroup"><a class="b1"><svg class="gly" viewBox="0 0 13.4 12" style="width:13.4px;height:12px;vertical-align:0.1px"><path d="M0 0h3.7v3H0zM4.85 0h3.7v3h-3.7zM9.7 0h3.7v3H9.7zM0 4.5h3.7v3H0zM4.85 4.5h3.7v3h-3.7zM9.7 4.5h3.7v3H9.7zM0 9h3.7v3H0zM4.85 9h3.7v3h-3.7zM9.7 9h3.7v3H9.7z" fill="#333"/></svg><i class="caret"></i></a><a class="b2"><svg class="gly" viewBox="0 0 14 14" style="width:14px;height:14px;vertical-align:-1.1px;margin-left:0.6px;margin-right:-0.9px"><path d="M0 10.2h13.3v2.9H0z M3.9 0h8.2v6.9z" fill="#333"/><path d="M8.4 3.7L3.3 7.5" stroke="#333" stroke-width="2.5" fill="none"/></svg><i class="caret"></i></a></div>
     </div>
   </div>
   <table class="tbl">
    <colgroup><col style="width:44px"><col style="width:101px"><col style="width:251px"><col style="width:167px"><col style="width:166px"><col style="width:166px"><col style="width:167px"><col style="width:251px"><col style="width:192px"><col style="width:197px"></colgroup>
    <thead><tr><th class="cb"><i class="chk"></i></th><th>ID</th><th>手机号</th><th>交易类型</th><th>交易数量</th><th>交易价格</th><th>交易金额</th><th>交易对象</th><th>交易状态</th><th>操作</th></tr></thead>
    <tbody>
<tr><td class="cb"><i class="chk"></i></td><td>21</td><td>13200000001</td><td><span class="label lw">卖单</span></td><td>30</td><td>1.20</td><td>36.00</td><td>-</td><td><span class="stt" style="color:#1688f1"><svg class="fa " viewBox="0 -1536 1536 1792" style="width:12.000px;height:14px;vertical-align:-2.000px;fill:#1688f1;"><path transform="scale(1,-1)" d="M1536 640C1536 1064 1192 1408 768 1408C344 1408 0 1064 0 640C0 216 344 -128 768 -128C1192 -128 1536 216 1536 640Z"/></svg> 挂单中</span></td><td><a class="btn-xs">订单详情</a></td></tr>
<tr><td class="cb"><i class="chk"></i></td><td>20</td><td>13012345678</td><td><span class="label lw">卖单</span></td><td>10</td><td>1.20</td><td>12.00</td><td>15854033307</td><td><span class="stt" style="color:#18bc9c"><svg class="fa " viewBox="0 -1536 1536 1792" style="width:12.000px;height:14px;vertical-align:-2.000px;fill:#18bc9c;"><path transform="scale(1,-1)" d="M1536 640C1536 1064 1192 1408 768 1408C344 1408 0 1064 0 640C0 216 344 -128 768 -128C1192 -128 1536 216 1536 640Z"/></svg> 待确认</span></td><td><a class="btn-xs">订单详情</a></td></tr>
<tr><td class="cb"><i class="chk"></i></td><td>19</td><td>13012345678</td><td><span class="label li">买单</span></td><td>10</td><td>1.20</td><td>12.00</td><td>13200000001</td><td><span class="stt" style="color:#f39c12"><svg class="fa " viewBox="0 -1536 1536 1792" style="width:12.000px;height:14px;vertical-align:-2.000px;fill:#f39c12;"><path transform="scale(1,-1)" d="M1536 640C1536 1064 1192 1408 768 1408C344 1408 0 1064 0 640C0 216 344 -128 768 -128C1192 -128 1536 216 1536 640Z"/></svg> 待付款</span></td><td><a class="btn-xs">订单详情</a></td></tr>
<tr><td class="cb"><i class="chk"></i></td><td>18</td><td>17106837336</td><td><span class="label li">买单</span></td><td>30</td><td>1.30</td><td>39.00</td><td>13200000001</td><td><span class="stt" style="color:#f39c12"><svg class="fa " viewBox="0 -1536 1536 1792" style="width:12.000px;height:14px;vertical-align:-2.000px;fill:#f39c12;"><path transform="scale(1,-1)" d="M1536 640C1536 1064 1192 1408 768 1408C344 1408 0 1064 0 640C0 216 344 -128 768 -128C1192 -128 1536 216 1536 640Z"/></svg> 待付款</span></td><td><a class="btn-xs">订单详情</a></td></tr>
<tr><td class="cb"><i class="chk"></i></td><td>17</td><td>17720221522</td><td><span class="label lw">卖单</span></td><td>30</td><td>1.20</td><td>36.00</td><td>-</td><td><span class="stt" style="color:#f75444"><svg class="fa " viewBox="0 -1536 1536 1792" style="width:12.000px;height:14px;vertical-align:-2.000px;fill:#f75444;"><path transform="scale(1,-1)" d="M1536 640C1536 1064 1192 1408 768 1408C344 1408 0 1064 0 640C0 216 344 -128 768 -128C1192 -128 1536 216 1536 640Z"/></svg> 已撤单</span></td><td><a class="btn-xs">订单详情</a></td></tr>
<tr><td class="cb"><i class="chk"></i></td><td>16</td><td>17720221522</td><td><span class="label li">买单</span></td><td>30</td><td>1.20</td><td>36.00</td><td>-</td><td><span class="stt" style="color:#f75444"><svg class="fa " viewBox="0 -1536 1536 1792" style="width:12.000px;height:14px;vertical-align:-2.000px;fill:#f75444;"><path transform="scale(1,-1)" d="M1536 640C1536 1064 1192 1408 768 1408C344 1408 0 1064 0 640C0 216 344 -128 768 -128C1192 -128 1536 216 1536 640Z"/></svg> 已撤单</span></td><td><a class="btn-xs">订单详情</a></td></tr>
<tr><td class="cb"><i class="chk"></i></td><td>15</td><td>17720221522</td><td><span class="label li">买单</span></td><td>30</td><td>0.01</td><td>0.30</td><td>-</td><td><span class="stt" style="color:#f75444"><svg class="fa " viewBox="0 -1536 1536 1792" style="width:12.000px;height:14px;vertical-align:-2.000px;fill:#f75444;"><path transform="scale(1,-1)" d="M1536 640C1536 1064 1192 1408 768 1408C344 1408 0 1064 0 640C0 216 344 -128 768 -128C1192 -128 1536 216 1536 640Z"/></svg> 已撤单</span></td><td><a class="btn-xs">订单详情</a></td></tr>
<tr><td class="cb"><i class="chk"></i></td><td>14</td><td>17720221522</td><td><span class="label li">买单</span></td><td>30</td><td>1.01</td><td>30.30</td><td>-</td><td><span class="stt" style="color:#f75444"><svg class="fa " viewBox="0 -1536 1536 1792" style="width:12.000px;height:14px;vertical-align:-2.000px;fill:#f75444;"><path transform="scale(1,-1)" d="M1536 640C1536 1064 1192 1408 768 1408C344 1408 0 1064 0 640C0 216 344 -128 768 -128C1192 -128 1536 216 1536 640Z"/></svg> 已撤单</span></td><td><a class="btn-xs">订单详情</a></td></tr>
<tr><td class="cb"><i class="chk"></i></td><td>13</td><td>17720221522</td><td><span class="label li">买单</span></td><td>30</td><td>1.10</td><td>33.00</td><td>-</td><td><span class="stt" style="color:#f75444"><svg class="fa " viewBox="0 -1536 1536 1792" style="width:12.000px;height:14px;vertical-align:-2.000px;fill:#f75444;"><path transform="scale(1,-1)" d="M1536 640C1536 1064 1192 1408 768 1408C344 1408 0 1064 0 640C0 216 344 -128 768 -128C1192 -128 1536 216 1536 640Z"/></svg> 已撤单</span></td><td><a class="btn-xs">订单详情</a></td></tr>
<tr><td class="cb"><i class="chk"></i></td><td>12</td><td>17720221522</td><td><span class="label li">买单</span></td><td>30</td><td>1.20</td><td>36.00</td><td>-</td><td><span class="stt" style="color:#f75444"><svg class="fa " viewBox="0 -1536 1536 1792" style="width:12.000px;height:14px;vertical-align:-2.000px;fill:#f75444;"><path transform="scale(1,-1)" d="M1536 640C1536 1064 1192 1408 768 1408C344 1408 0 1064 0 640C0 216 344 -128 768 -128C1192 -128 1536 216 1536 640Z"/></svg> 已撤单</span></td><td><a class="btn-xs">订单详情</a></td></tr>
    </tbody>
   </table>
   <div class="pager">
     <div class="pinfo">显示第 1 到第 10 条记录，总共 21 条记录 <span class="plist">每页显示 <a class="psize">10 <i class="caret up"></i></a> 条记录</span></div>
     <div class="pright">
       <ul class="pg"><li>上一页</li><li class="active">1</li><li>2</li><li>3</li><li>下一页</li></ul>
       <span class="jin"></span><a class="jbtn">跳转</a>
     </div>
   </div>
  </div>
 </div>
</div>
<svg class="wm" width="1990" height="1061" viewBox="0 0 1990 1061"><circle cx="986.2" cy="530.2" r="139.6" fill="none" stroke="#ff0000" stroke-width="5"/>
<text transform="translate(986.2,530.2) rotate(-101.40) translate(0,-107) scale(0.74,1)" text-anchor="middle" font-size="26" font-weight="bold" font-style="italic" stroke="#ff0000" stroke-width="0.8">w</text>
<text transform="translate(986.2,530.2) rotate(-85.60) translate(0,-107) scale(0.74,1)" text-anchor="middle" font-size="26" font-weight="bold" font-style="italic" stroke="#ff0000" stroke-width="0.8">w</text>
<text transform="translate(986.2,530.2) rotate(-69.60) translate(0,-107) scale(0.74,1)" text-anchor="middle" font-size="26" font-weight="bold" font-style="italic" stroke="#ff0000" stroke-width="0.8">w</text>
<text transform="translate(986.2,530.2) rotate(-55.40) translate(0,-107)" text-anchor="middle" font-size="26" font-weight="bold">.</text>
<text transform="translate(986.2,530.2) rotate(-37.20) translate(0,-107)" text-anchor="middle" font-size="29">5</text>
<text transform="translate(986.2,530.2) rotate(-21.70) translate(0,-107)" text-anchor="middle" font-size="29">1</text>
<text transform="translate(986.2,530.2) rotate(-5.40) translate(0,-107)" text-anchor="middle" font-size="29">5</text>
<text transform="translate(986.2,530.2) rotate(10.90) translate(0,-107) scale(0.85,1)" text-anchor="middle" font-size="26" font-weight="bold" font-style="italic" stroke="#ff0000" stroke-width="0.8">y</text>
<text transform="translate(986.2,530.2) rotate(26.70) translate(0,-107) scale(0.78,1)" text-anchor="middle" font-size="26" font-weight="bold" font-style="italic" stroke="#ff0000" stroke-width="0.8">m</text>
<text transform="translate(986.2,530.2) rotate(40.80) translate(0,-107)" text-anchor="middle" font-size="26" font-weight="bold">.</text>
<text transform="translate(986.2,530.2) rotate(59.00) translate(0,-107) scale(0.92,1)" text-anchor="middle" font-size="26" font-weight="bold" font-style="italic">c</text>
<text transform="translate(986.2,530.2) rotate(75.20) translate(0,-107) scale(0.92,1)" text-anchor="middle" font-size="26" font-weight="bold" font-style="italic">o</text>
<text transform="translate(986.2,530.2) rotate(91.70) translate(0,-107) scale(0.78,1)" text-anchor="middle" font-size="26" font-weight="bold" font-style="italic" stroke="#ff0000" stroke-width="0.8">m</text>
<text transform="translate(986.2,530.2) rotate(26.60) translate(0,131)" text-anchor="middle" font-size="14.7" font-style="italic">5</text>
<text transform="translate(986.2,530.2) rotate(20.10) translate(0,131)" text-anchor="middle" font-size="14.7" font-style="italic">1</text>
<text transform="translate(986.2,530.2) rotate(13.60) translate(0,131)" text-anchor="middle" font-size="14.7" font-style="italic">5</text>
<text transform="translate(986.2,530.2) rotate(7.10) translate(0,131)" text-anchor="middle" font-size="14.7" font-style="italic">y</text>
<text transform="translate(986.2,530.2) rotate(0.60) translate(0,131)" text-anchor="middle" font-size="14.7" font-style="italic">m</text>
<text transform="translate(986.2,530.2) rotate(-5.90) translate(0,131)" text-anchor="middle" font-size="14.7" font-style="italic">.</text>
<text transform="translate(986.2,530.2) rotate(-12.40) translate(0,131)" text-anchor="middle" font-size="14.7" font-style="italic">c</text>
<text transform="translate(986.2,530.2) rotate(-18.90) translate(0,131)" text-anchor="middle" font-size="14.7" font-style="italic">o</text>
<text transform="translate(986.2,530.2) rotate(-25.40) translate(0,131)" text-anchor="middle" font-size="14.7" font-style="italic">m</text>
<text x="913" y="542.6" font-size="36" letter-spacing="2.2">515</text>
<text class="kai" x="983.5" y="543.6" font-size="35.5" letter-spacing="5" font-weight="bold" transform="translate(1021,530) skewX(-3) translate(-1021,-530)">源码</text>
<text x="912" y="608.9" font-size="26.5" font-weight="bold" textLength="152.5" lengthAdjust="spacing">515ym. com</text></svg>
</body>
</html>
